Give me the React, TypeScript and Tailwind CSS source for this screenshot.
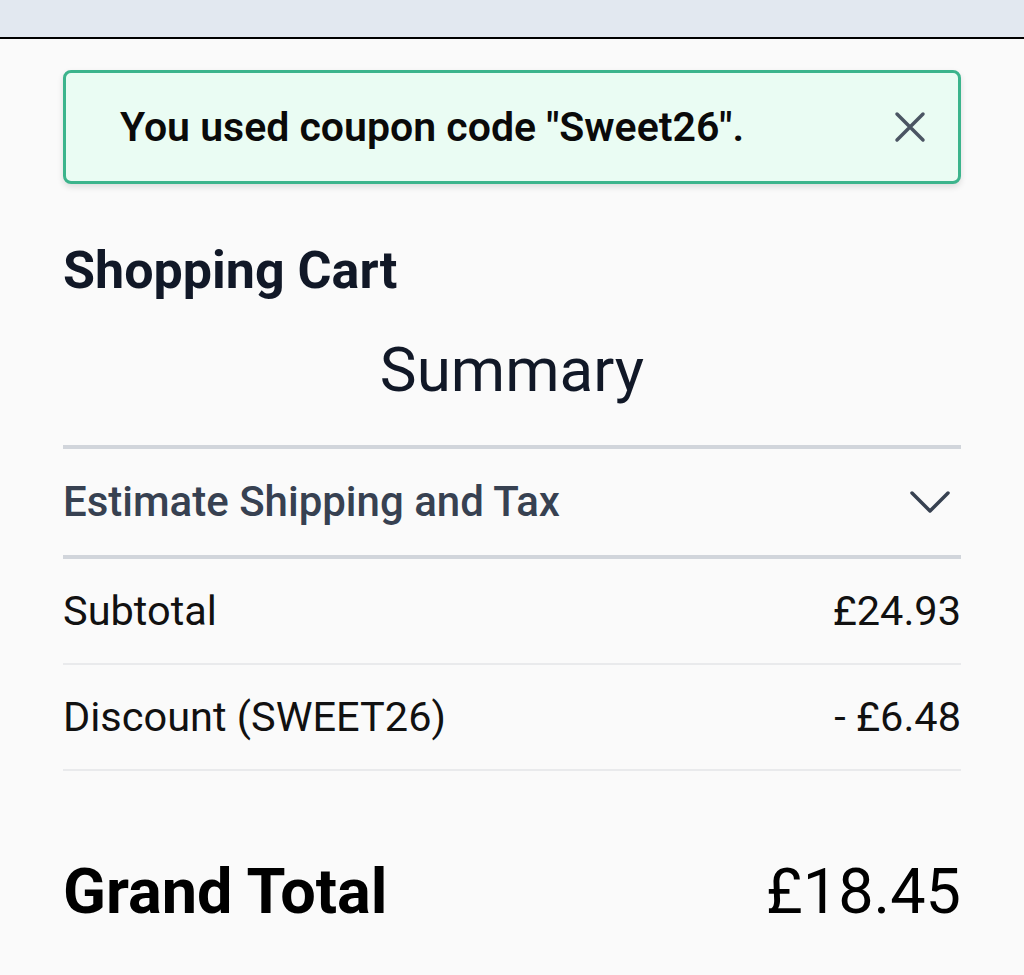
import React from "react";

const font = { fontFamily: "Roboto, 'Noto Sans', sans-serif" };

const CloseIcon = () => (
  <svg width="32" height="32" viewBox="0 0 32 32" fill="none" stroke="#4b5563" strokeWidth="3.5" strokeLinecap="round">
    <path d="M3 3 L29 29 M29 3 L3 29" />
  </svg>
);

const Chevron = () => (
  <svg width="42" height="26" viewBox="0 0 42 26" fill="none" stroke="#374151" strokeWidth="3.5" strokeLinecap="round" strokeLinejoin="round">
    <path d="M3 4 L21 22 L39 4" />
  </svg>
);

const Row = ({ label, value }: { label: string; value: string }) => (
  <>
    <div className="flex h-[104px] items-center justify-between text-[41.5px] leading-[48px] text-[#111]">
      <span>{label}</span>
      <span>{value}</span>
    </div>
    <div className="h-[2px] bg-[#e9eaec]" />
  </>
);

export default function App() {
  return (
    <div className="min-h-[975px] bg-[#fafafa]" style={font}>
      <div className="h-[39px] border-b-2 border-black bg-[#e2e8f0]" />
      <div className="px-[63px] pt-[31px]">
        <div className="flex h-[114px] items-center justify-between rounded-lg border-[3px] border-[#3cb48c] bg-[#eafcf3] pl-[54px] pr-[32px] shadow-[0_3px_6px_rgba(0,0,0,0.12)]">
          <span className="text-[41px] font-semibold leading-[48px] text-[#0a0a0a]">
            You used coupon code "Sweet26".
          </span>
          <CloseIcon />
        </div>

        <h1 className="mt-[57px] text-[52px] font-bold leading-[60px] text-[#111827]">Shopping Cart</h1>
        <h2 className="mt-[33px] text-center text-[62px] leading-[72px] text-[#111827]">Summary</h2>

        <div className="mt-[39px] h-[4px] bg-[#d1d5db]" />
        <div className="flex h-[106px] items-center justify-between">
          <span className="text-[42px] font-medium leading-[50px] text-[#374151]">Estimate Shipping and Tax</span>
          <span className="pr-[10px]">
            <Chevron />
          </span>
        </div>
        <div className="h-[4px] bg-[#d1d5db]" />

        <Row label="Subtotal" value="£24.93" />
        <Row label="Discount (SWEET26)" value="- £6.48" />

        <div className="mt-[84px] flex items-center justify-between text-[63px] leading-[74px] text-black">
          <span className="font-bold">Grand Total</span>
          <span>£18.45</span>
        </div>
      </div>
    </div>
  );
}
